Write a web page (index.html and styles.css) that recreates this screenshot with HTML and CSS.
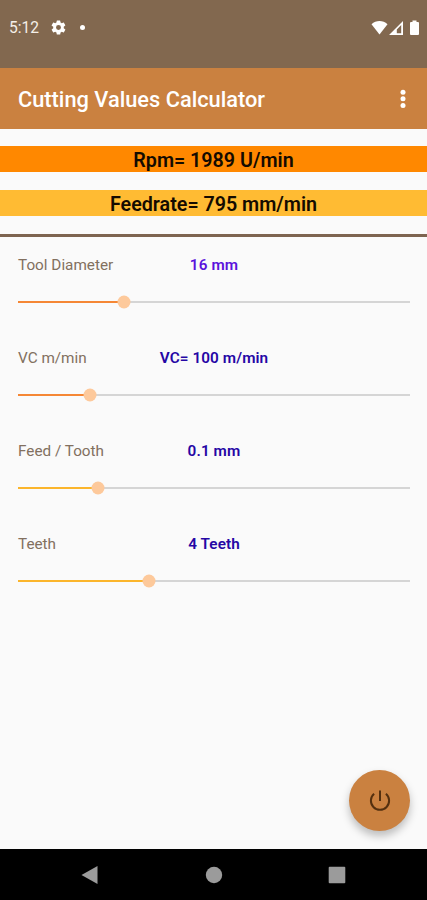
FILE: index.html
```
<!DOCTYPE html>
<html lang="en">

<head>
  <meta charset="UTF-8" />
  <meta name="viewport" content="width=device-width, initial-scale=1.0" />
  <title>Cutting Values Calculator</title>
  <link rel="stylesheet" href="styles.css">
</head>

<body>

  <div class="status-bar">
    <span class="time">5:12</span>
    <svg class="gear" viewBox="0 0 24 24" width="17" height="17">
      <path fill="#fff" fill-rule="evenodd" d="M19.4 13a7.5 7.5 0 0 0 0-2l2.1-1.65a.5.5 0 0 0 .12-.64l-2-3.46a.5.5 0 0 0-.61-.22l-2.49 1a7.3 7.3 0 0 0-1.69-.98l-.38-2.65A.5.5 0 0 0 14 2h-4a.5.5 0 0 0-.49.42l-.38 2.65c-.61.25-1.17.59-1.69.98l-2.49-1a.5.5 0 0 0-.61.22l-2 3.46a.5.5 0 0 0 .12.64L4.57 11a7.9 7.9 0 0 0 0 2l-2.11 1.65a.5.5 0 0 0-.12.64l2 3.46c.12.22.39.3.61.22l2.49-1c.52.4 1.08.73 1.69.98l.38 2.65c.03.24.24.42.49.42h4c.25 0 .46-.18.49-.42l.38-2.65c.61-.25 1.17-.59 1.69-.98l2.49 1c.23.09.49 0 .61-.22l2-3.46a.5.5 0 0 0-.12-.64L19.4 13zM12 15.5a3.5 3.5 0 1 1 0-7 3.5 3.5 0 0 1 0 7z" />
    </svg>
    <span class="dot"></span>
    <div class="status-icons">
      <svg viewBox="0 0 17 15" width="17" height="15">
        <path fill="#fff" d="M0.5 4.2C5 0 12 0 16.5 4.2L8.5 14.5z" />
      </svg>
      <svg viewBox="0 0 14 14" width="14" height="14">
        <path fill="#fff" fill-rule="evenodd" d="M0 14L14 0v14zM7.8 8.4v3.8h4.4V4z" />
      </svg>
      <svg class="battery" viewBox="0 0 9 15" width="9" height="15">
        <path fill="#fff" d="M2.5 0.5h4v1.5H8a1 1 0 0 1 1 1V14a1 1 0 0 1-1 1H1a1 1 0 0 1-1-1V3a1 1 0 0 1 1-1h1.5z" />
      </svg>
    </div>
  </div>

  <header class="app-bar">
    <h1>Cutting Values Calculator</h1>
    <svg viewBox="0 0 6 20" width="6" height="20">
      <circle cx="3" cy="3.2" r="2.5" fill="#fff" />
      <circle cx="3" cy="9.8" r="2.5" fill="#fff" />
      <circle cx="3" cy="16.4" r="2.5" fill="#fff" />
    </svg>
  </header>

  <main>
    <div class="results">
      <div class="result rpm">Rpm= 1989 U/min</div>
      <div class="result feedrate">Feedrate= 795 mm/min</div>
    </div>

    <div class="settings">
      <div class="setting">
        <div class="setting-text">
          <span class="label">Tool Diameter</span>
          <span class="value violet">16 mm</span>
        </div>
        <div class="slider" style="--pos: 27.1%"><div class="fill"></div><div class="thumb"></div></div>
      </div>
      <div class="setting">
        <div class="setting-text">
          <span class="label">VC m/min</span>
          <span class="value">VC= 100 m/min</span>
        </div>
        <div class="slider" style="--pos: 18.4%"><div class="fill"></div><div class="thumb"></div></div>
      </div>
      <div class="setting">
        <div class="setting-text">
          <span class="label">Feed / Tooth</span>
          <span class="value">0.1 mm</span>
        </div>
        <div class="slider yellow" style="--pos: 20.4%"><div class="fill"></div><div class="thumb"></div></div>
      </div>
      <div class="setting">
        <div class="setting-text">
          <span class="label">Teeth</span>
          <span class="value">4 Teeth</span>
        </div>
        <div class="slider yellow" style="--pos: 33.4%"><div class="fill"></div><div class="thumb"></div></div>
      </div>
    </div>

    <button class="power-btn" aria-label="Exit">
      <svg viewBox="0 0 22 22" width="22" height="22">
        <path fill="none" stroke="#54300f" stroke-width="2" d="M11 0.5v10.5M5.1 3.8a9.1 9.1 0 1 0 11.8 0" />
      </svg>
    </button>
  </main>

  <nav class="nav-bar">
    <svg viewBox="0 0 18 20" width="18" height="20"><path fill="#9b9b9b" d="M0.5 10L16.5 1v18z" /></svg>
    <svg viewBox="0 0 18 18" width="18" height="18"><circle cx="9" cy="9" r="8.2" fill="#9b9b9b" /></svg>
    <svg viewBox="0 0 18 18" width="18" height="18"><rect x="0.7" y="0.7" width="16.6" height="16.6" rx="1" fill="#9b9b9b" /></svg>
  </nav>

</body>

</html>
```

FILE: styles.css
```
* {
  box-sizing: border-box;
}

body {
  font-family: Roboto, sans-serif;
  background: #fafafa;
  margin: 0;
  height: 900px;
  display: flex;
  flex-direction: column;
  overflow: hidden;
}

.status-bar {
  height: 68px;
  background: #82684f;
  color: #f5efe8;
  display: flex;
  align-items: center;
  padding: 0 8px 13px 9px;
}

.time {
  font-size: 15.6px;
  width: 41px;
}

.dot {
  width: 5px;
  height: 5px;
  border-radius: 50%;
  background: #fff;
  margin-left: 13px;
}

.status-icons {
  display: flex;
  align-items: center;
  gap: 1px;
  margin-left: auto;
}

.battery {
  margin-left: 6px;
}

.app-bar {
  height: 61px;
  background: #ca8140;
  display: flex;
  align-items: center;
  justify-content: space-between;
  padding: 0 21px 0 18px;
}

.app-bar h1 {
  margin: 1px 0 0;
  color: #fff;
  font-size: 21.8px;
  font-weight: 500;
}

main {
  flex: 1;
  position: relative;
}

.results {
  display: flex;
  flex-direction: column;
  gap: 18px;
  padding: 17px 0 18px;
  border-bottom: 3px solid #7d6450;
}

.result {
  height: 26px;
  line-height: 29px;
  text-align: center;
  font-size: 19.7px;
  font-weight: 600;
  color: #140b00;
}

.rpm {
  background: #ff8800;
}

.feedrate {
  background: #ffbb33;
}

.settings {
  padding: 18px 17px 0 18px;
}

.setting {
  height: 93px;
}

.setting-text {
  display: grid;
  grid-template-columns: 1fr auto 1fr;
  height: 20px;
  line-height: 21px;
  font-size: 15.3px;
}

.label {
  color: #82705f;
}

.value {
  color: #2506a5;
  font-weight: 600;
  letter-spacing: 0.1px;
}

.violet {
  color: #5b12dc;
}

.slider {
  position: relative;
  height: 2px;
  margin-top: 26px;
  background: #d5d5d5;
}

.fill {
  width: var(--pos);
  height: 2px;
  background: #f58735;
}

.yellow .fill {
  background: #fbb52c;
}

.thumb {
  position: absolute;
  left: var(--pos);
  top: 50%;
  width: 13px;
  height: 13px;
  border-radius: 50%;
  background: #fdc99b;
  transform: translate(-50%, -50%);
}

.power-btn {
  position: absolute;
  right: 17px;
  bottom: 18px;
  width: 61px;
  height: 61px;
  border: none;
  border-radius: 50%;
  background: #ca8140;
  box-shadow: 0 5px 8px rgba(0, 0, 0, 0.25);
  display: flex;
  align-items: center;
  justify-content: center;
  padding: 0;
}

.nav-bar {
  height: 51px;
  background: #000;
  display: flex;
  align-items: center;
  justify-content: space-between;
  padding: 0 81px;
}
```
